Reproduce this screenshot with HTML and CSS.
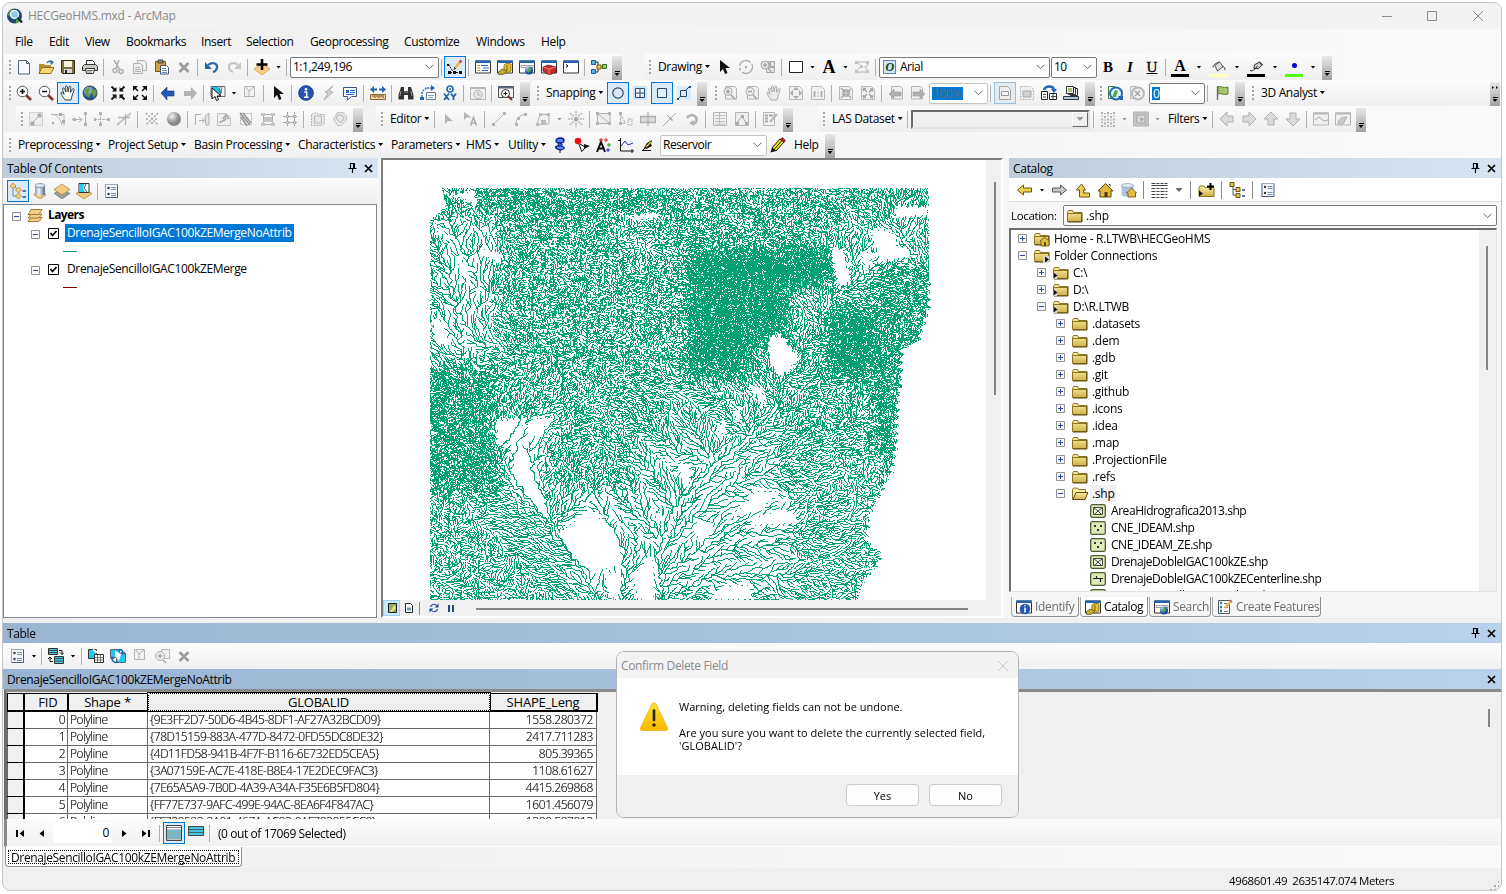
FILE: index.html
```html
<!DOCTYPE html>
<html lang="en">
<head>
<meta charset="utf-8">
<title>HECGeoHMS.mxd - ArcMap</title>
<link rel="stylesheet" href="styles.css">
</head>
<body>
<svg class="defs" aria-hidden="true">
<defs>
<linearGradient id="gold" x1="0" y1="0" x2="0" y2="1"><stop offset="0" stop-color="#fdf0a0"/><stop offset="1" stop-color="#d0b04c"/></linearGradient>
<linearGradient id="warn" x1="0" y1="0" x2="0" y2="1"><stop offset="0" stop-color="#ffe030"/><stop offset="1" stop-color="#fbb800"/></linearGradient>
<linearGradient id="cyl"><stop offset="0" stop-color="#8a9bb8"/><stop offset=".4" stop-color="#eef3fa"/><stop offset="1" stop-color="#56688c"/></linearGradient>
<radialGradient id="ball" cx=".35" cy=".3"><stop offset="0" stop-color="#f4f4f4"/><stop offset="1" stop-color="#8a8a8a"/></radialGradient>
<radialGradient id="earth" cx=".35" cy=".3"><stop offset="0" stop-color="#bfe6ff"/><stop offset="1" stop-color="#1c4f9c"/></radialGradient>
</defs>
<symbol id="app" viewBox="0 0 16 16"><circle cx="7.5" cy="8" r="7.5" fill="#1b4a70"/><path d="M2 3l3-2 2 3-3 3-3 1zM9 12l4-3-1 5-3 1z" fill="#5aa23c"/><circle cx="7.5" cy="6.5" r="4" fill="#8cc8e8" stroke="#e8f4fa" stroke-width="1.4"/><path d="M10.5 9.5l4.500 5" stroke="#14324c" stroke-width="2.600"/></symbol>
<symbol id="new" viewBox="0 0 16 16"><path d="M2.500 1.500h8l3 3v10.500h-11z" fill="#f6faff" stroke="#53657e"/><path d="M10.500 1.500v3h3" fill="none" stroke="#53657e"/></symbol>
<symbol id="open" viewBox="0 0 16 16"><path d="M1 14V5h5l1 1h6v8z" fill="#b8932c"/><path d="M1 14.500l3-6h12l-3 6z" fill="#f3da78" stroke="#8a6d20"/><path d="M9 4c1-2 3-2 5-1" stroke="#2468a8" stroke-width="1.500" fill="none"/><path d="M12 1l4 2-3 3z" fill="#2468a8"/></symbol>
<symbol id="save" viewBox="0 0 16 16"><path d="M1.500 1.500h13v13h-12l-1-1z" fill="#7d7440" stroke="#2c2810"/><path d="M4 2h8v6H4z" fill="#f5f2e0"/><path d="M4 10h8v4H4z" fill="#d8d8d8"/><path d="M5 11h2v3H5z" fill="#2c2810"/></symbol>
<symbol id="print" viewBox="0 0 16 16"><path d="M4.500 6V1.500h6l2 2V6" fill="#fff" stroke="#333"/><path d="M.5 7.500l2-2h11l2 2v4H.5z" fill="#c9c9c0" stroke="#333"/><path d="M3.500 9.500h9l-1 5h-7z" fill="#fff" stroke="#333"/><path d="M5 11.500h6M5 13h5" stroke="#777"/></symbol>
<symbol id="cut" viewBox="0 0 16 16"><g fill="none" stroke="#b0b0b0" stroke-width="1.500"><path d="M4 1l6 10M9 1L6 9"/><circle cx="5" cy="11.500" r="2"/><circle cx="11" cy="12.500" r="2"/></g></symbol>
<symbol id="copy" viewBox="0 0 16 16"><g fill="#efefef" stroke="#b0b0b0"><path d="M5.500 1.500h7l2 2v8h-9z"/><path d="M1.500 4.500h7l2 2v8h-9z"/><path d="M3 8.500h5M3 10.500h6M3 12.500h6"/></g></symbol>
<symbol id="paste" viewBox="0 0 16 16"><path d="M1.500 2.500h10v10h-10z" fill="#dba03e" stroke="#7d5414"/><path d="M4 1h5v3H4z" fill="#888" stroke="#444"/><path d="M6.500 6.500h6l2 2v6.500h-8z" fill="#fff" stroke="#445a7a"/><path d="M8 9.500h4M8 11.500h5M8 13.500h5" stroke="#6888b8"/></symbol>
<symbol id="del" viewBox="0 0 16 16"><path d="M3.500 4l9 9M12.500 4l-9 9" stroke="#9c9c9c" stroke-width="2.600"/></symbol>
<symbol id="undo" viewBox="0 0 16 16"><path d="M4 6c5-4 10-1 9 3-.5 2-2 3.500-4 4" fill="none" stroke="#2468a8" stroke-width="2.200"/><path d="M1 3v7h7z" fill="#2468a8"/></symbol>
<symbol id="redo" viewBox="0 0 16 16"><path d="M12 6C7 2 2 5 3 9c.5 2 2 3.500 4 4" fill="none" stroke="#c4c4c4" stroke-width="2"/><path d="M15 3v7H8z" fill="#c4c4c4"/></symbol>
<symbol id="add" viewBox="0 0 16 16"><path d="M8 4l8 6-8 6-8-6z" fill="#f6cf7c" stroke="#b98c3c" stroke-width=".6"/><path d="M8 0v11M2.500 5.500h11" stroke="#000" stroke-width="2.600"/></symbol>
<symbol id="edt" viewBox="0 0 16 16"><path d="M1.500 5l4 7M3 13.500h11" fill="none" stroke="#111" stroke-dasharray="2 1"/><path d="M1 12h3v3H1zM6 12h3v3H6zM12 12h3v3h-3zM0 5h2v2H0z" fill="#111"/><path d="M8 9l5-6" stroke="#f0b050" stroke-width="2.600"/><path d="M12.500 3.500l2-2" stroke="#c05858" stroke-width="2.800"/><path d="M6.500 11l.7-3 2 1.800z" fill="#333"/></symbol>
<symbol id="win" viewBox="0 0 16 16"><path d="M.5 2h15v12H.5z" fill="#fff" stroke="#333"/><path d="M0 1.500h16v2.500H0z" fill="#2463ad"/></symbol>
<symbol id="toc" viewBox="0 0 16 16"><use href="#win"/><path d="M2 6.500h3M2 9h3M2 11.500h3" stroke="#c09030"/><path d="M6 6.500h7M8 9h6M7 11.500h6" stroke="#2463ad"/></symbol>
<symbol id="cat" viewBox="0 0 16 16"><use href="#win"/><path d="M7 6l3-2 4 1v7l-4 2-3-1z" fill="#e4c02c" stroke="#776010" stroke-width=".8"/><path d="M1 13l4-3 5 2-3 3-5 1z" fill="#c8a830" stroke="#3c4c20" stroke-width=".7"/><path d="M10 6v6" stroke="#776010"/></symbol>
<symbol id="search" viewBox="0 0 16 16"><use href="#win"/><path d="M2 6.500h12v2H2z" fill="#fff" stroke="#888" stroke-width=".8"/><circle cx="10" cy="11.500" r="4" fill="url(#earth)"/><path d="M8 10l3-1 1 2-3 3z" fill="#5aa84a"/></symbol>
<symbol id="box" viewBox="0 0 16 16"><use href="#win"/><path d="M2 8l5-2 8 2v5l-7 3-6-4z" fill="#c4322a" stroke="#641410" stroke-width=".8"/><path d="M2 8l6 2 7-2M8 10v6" stroke="#ff9a8a" fill="none" stroke-width=".7"/></symbol>
<symbol id="py" viewBox="0 0 16 16"><use href="#win"/><path d="M3 5.500l2 1.500-2 1.500" stroke="#000" fill="none"/></symbol>
<symbol id="model" viewBox="0 0 16 16"><path d="M4 3h3v10H4M7 8h5" fill="none" stroke="#333"/><path d="M.5 1.500h4v4h-4zM.5 10.500h4v4h-4z" fill="#5bb5e8" stroke="#1c5c94"/><path d="M6 6h4v4H6z" fill="#f0c040" stroke="#7c6010"/><path d="M11.500 5.500h4v4h-4z" fill="#8cd070" stroke="#2c7020"/></symbol>
<symbol id="ptr" viewBox="0 0 16 16"><path d="M4 1v12l3-3 2 5 2.500-1-2-5H14z" fill="#111"/></symbol>
<symbol id="rot" viewBox="0 0 16 16"><circle cx="8" cy="8" r="6.500" fill="none" stroke="#aaa" stroke-width="1.300" stroke-dasharray="14 2 3 2"/><circle cx="8" cy="8" r="1.200" fill="#aaa"/></symbol>
<symbol id="zsel" viewBox="0 0 16 16"><g fill="#e4e4e4" stroke="#a8a8a8"><path d="M4.500 2.500h5v5h-5zM10.500 2.500h4v5h-4zM6.500 8.500h8v5h-8z"/><circle cx="5" cy="6" r="4"/><path d="M3 6h4M5 4v4M8 9l4 5" stroke-width="1.500"/></g></symbol>
<symbol id="rect" viewBox="0 0 16 16"><path d="M1.500 2.500h13v11h-13z" fill="#fff" stroke="#222" stroke-width="1"/></symbol>
<symbol id="verts" viewBox="0 0 16 16"><path d="M3 3h11v3l-3 2 4 5H2l5-6z" fill="none" stroke="#b4b4b4"/><path d="M1 2h3v3H1zM12 2h3v3h-3zM12 11h3v3h-3zM1 11h3v3H1zM6 6h3v3H6z" fill="#c4c4c4"/></symbol>
<symbol id="fill" viewBox="0 0 16 12"><path d="M4 5l5-4 4 5-6 5z" fill="#ddd" stroke="#444"/><path d="M2 7c0-3 4-5 7-6M12 6c3 0 3 2 3 4" stroke="#333" fill="none"/></symbol>
<symbol id="pen" viewBox="0 0 16 12"><path d="M5 8l1-4 5-2.500 3 3-4 4z" fill="#ccc" stroke="#222"/><path d="M1 10.500c3 1 5-1 8-5M11 .500l4 4" stroke="#111" fill="none"/></symbol>
<symbol id="zin" viewBox="0 0 16 16"><path d="M10 10l5 5" stroke="#8c3030" stroke-width="2.600"/><circle cx="6.500" cy="6.500" r="5.300" fill="#f8fbff" stroke="#555"/><path d="M4 6.500h5M6.500 4v5" stroke="#111" stroke-width="1.600"/></symbol>
<symbol id="zout" viewBox="0 0 16 16"><path d="M10 10l5 5" stroke="#8c3030" stroke-width="2.600"/><circle cx="6.500" cy="6.500" r="5.300" fill="#f8fbff" stroke="#555"/><path d="M4 6.500h5" stroke="#111" stroke-width="1.600"/></symbol>
<symbol id="hand" viewBox="0 0 16 16"><path d="M5 15C3 12 1 9 1 8s1.500-1 3 1.500L2.500 4c0-1.500 1.500-1.500 2 0L6 7 5.500 2c0-1.500 1.500-1.500 2 0L8 7l1-5c.5-1.500 2-1 1.700.500L10.500 7.500 12.500 4c1-1 2 0 1.500 1l-2 6-1 4z" fill="#fff" stroke="#333" stroke-width=".9"/></symbol>
<symbol id="ghand" viewBox="0 0 16 16"><path d="M5 15C3 12 1 9 1 8s1.500-1 3 1.500L2.500 4c0-1.500 1.500-1.500 2 0L6 7 5.500 2c0-1.500 1.500-1.500 2 0L8 7l1-5c.5-1.500 2-1 1.700.500L10.500 7.500 12.500 4c1-1 2 0 1.500 1l-2 6-1 4z" fill="#ececec" stroke="#aaa"/></symbol>
<symbol id="globe" viewBox="0 0 16 16"><circle cx="8" cy="8" r="7" fill="url(#earth)" stroke="#345"/><path d="M3 5l4-3 1 3-2 3 2 3-1 2-3-3zM10 4l4 1 .5 4-3 4-1-4z" fill="#6a9c30"/></symbol>
<symbol id="fin" viewBox="0 0 16 16"><path d="M1.500 1.500l4 4M14.500 1.500l-4 4M1.500 14.500l4-4M14.500 14.500l-4-4" stroke="#111" stroke-width="1.800"/><path d="M2 6.500h4.500V2zM14 6.500H9.500V2zM2 9.500h4.500V14zM14 9.500H9.500V14z" fill="#111"/></symbol>
<symbol id="fout" viewBox="0 0 16 16"><path d="M2 2l4 4M14 2l-4 4M2 14l4-4M14 14l-4-4" stroke="#111" stroke-width="1.500"/><path d="M1 6V1h5zM15 6V1h-5zM1 10v5h5zM15 10v5h-5z" fill="#111"/></symbol>
<symbol id="back" viewBox="0 0 16 16"><path d="M1 8l6-6v4h7v5H7v4z" fill="#2458b8" stroke="#173c80" stroke-width=".6"/></symbol>
<symbol id="fwd" viewBox="0 0 16 16"><path d="M15 8L9 2v4H2v5h7v4z" fill="#b4b4b4"/></symbol>
<symbol id="sel" viewBox="0 0 16 16"><path d="M1 1.500h14v10H1z" fill="#fff" stroke="#667"/><path d="M2 2h6l4 4-2 5-8-7z" fill="#20c0e8"/><path d="M10 2l-1 4 3 2M12 2l-2 9" stroke="#556" fill="none" stroke-width=".8"/><path d="M2 3v11l3-2.500 1.500 4 2-1-1.500-3.500h4z" fill="#fff" stroke="#111"/></symbol>
<symbol id="clr" viewBox="0 0 16 16"><path d="M2.500 1.500h10v10h-10z" fill="#f2f2f2" stroke="#b4b4b4"/><path d="M4 2l3 4v5M12 2L7 6" stroke="#b4b4b4" fill="none"/></symbol>
<symbol id="info" viewBox="0 0 16 16"><circle cx="8" cy="8" r="7.300" fill="#2456b0" stroke="#17387c"/><circle cx="8" cy="4.300" r="1.300" fill="#fff"/><path d="M6.300 7h2.400v5M6 12.300h4.500" stroke="#fff" stroke-width="1.500" fill="none"/></symbol>
<symbol id="bolt" viewBox="0 0 16 16"><path d="M13 1L5 7l3 1-4 7 9-8-4-1z" fill="#d4d4d4" stroke="#b0b0b0"/></symbol>
<symbol id="html" viewBox="0 0 16 16"><path d="M1.500 2.500h13v9h-5l-4 3.500v-3.500h-4z" fill="#fff" stroke="#3c5878"/><path d="M4 5h3v3H4z" fill="#2468c0"/><path d="M8 5.500h5M8 7.500h5M4 9.500h8" stroke="#2468c0"/></symbol>
<symbol id="meas" viewBox="0 0 16 16"><path d="M.5 9.500h15v5H.5z" fill="#f0d4a0" stroke="#8c6a34"/><path d="M3 10v2M5 10v3M7 10v2M9 10v3M11 10v2M13 10v3" stroke="#6a4a18"/><path d="M0 4.500L4 1v2.500h3v2H4V8zM16 4.500L12 1v2.500H9v2h3V8z" fill="#2463ad"/></symbol>
<symbol id="find" viewBox="0 0 16 16"><path d="M3 2h3v4h4V2h3l2.500 8v4.500H10V10H6v4.500H.500V10z" fill="#333"/><path d="M3 6l-1 5M13 6l1 5M6 7h4" stroke="#999"/></symbol>
<symbol id="route" viewBox="0 0 16 16"><path d="M2 12V7c0-2 4-2 4-4h6" fill="none" stroke="#2463ad" stroke-width="1.300" stroke-dasharray="2 1"/><path d="M11 0l4 3-4 3z" fill="#2463ad"/><path d="M6.500 7.500h9v7h-9z" fill="#fff" stroke="#667c94"/><path d="M8 10.500h6M8 12.500h5" stroke="#8aa4c0"/><path d="M0 12h4v3H0z" fill="#2463ad"/></symbol>
<symbol id="xy" viewBox="0 0 16 16"><circle cx="8" cy="4" r="3" fill="#fff" stroke="#2463ad" stroke-width="1.600"/><circle cx="8" cy="4" r="1" fill="#2463ad"/><path d="M2 8.500l5 6.500M7 8.500L2 15M9 8.500l2.500 3.500M14 8.500L11.500 12v3" stroke="#2463ad" stroke-width="1.800" fill="none"/></symbol>
<symbol id="time" viewBox="0 0 16 16"><path d="M.5 2.500h15v12H.5z" fill="#f0f0f0" stroke="#b8b8b8"/><path d="M.5 3h15" stroke="#b8b8b8" stroke-width="2"/><circle cx="8" cy="9.500" r="4.200" fill="#e8e8e8" stroke="#b0b0b0"/><path d="M8 7v3h2.500" stroke="#aaa" fill="none"/></symbol>
<symbol id="view" viewBox="0 0 16 16"><path d="M.5 1.500h15v11H.5z" fill="#f4f4f4" stroke="#555"/><path d="M.5 2.500h15" stroke="#556b84" stroke-width="2"/><path d="M10 11l4 4" stroke="#8c3030" stroke-width="2.200"/><circle cx="7.500" cy="8.500" r="4" fill="#fff" stroke="#333"/><path d="M5.500 8.500h4M7.500 6.500v4" stroke="#111"/></symbol>
<symbol id="scir" viewBox="0 0 16 16"><circle cx="8" cy="8" r="5.200" fill="none" stroke="#26466c" stroke-width="1.200"/></symbol>
<symbol id="sgrd" viewBox="0 0 16 16"><path d="M1 1h14v14H1z" fill="#cfe6f8"/><path d="M3.500 3.500h9v9h-9zM8 3.500v9M3.500 8h9" fill="#eef7ff" stroke="#26466c"/></symbol>
<symbol id="ssq" viewBox="0 0 16 16"><path d="M3.500 3.500h9v9h-9z" fill="#e0f0fc" stroke="#26466c" stroke-width="1"/></symbol>
<symbol id="sedg" viewBox="0 0 16 16"><path d="M1 1h14v14H1z" fill="#d8ebf8"/><path d="M4.500 5.500h6v6h-6zM1 15l4-4M10 5l4-4" fill="none" stroke="#26466c"/><path d="M1 14h2M13 2h2" stroke="#26466c" stroke-width="2"/></symbol>
<symbol id="pg" viewBox="0 0 16 16"><path d="M3.500 1.500h9l2 2v10.500h-11z" fill="#f0f0f0" stroke="#b4b4b4"/></symbol>
<symbol id="lzin" viewBox="0 0 16 16"><use href="#pg"/><circle cx="6" cy="6.500" r="4" fill="#eee" stroke="#a8a8a8"/><path d="M4 6.500h4M6 4.500v4M9 10l4 4" stroke="#a0a0a0" stroke-width="1.500"/></symbol>
<symbol id="lzout" viewBox="0 0 16 16"><use href="#pg"/><circle cx="6" cy="6.500" r="4" fill="#eee" stroke="#a8a8a8"/><path d="M4 6.500h4M9 10l4 4" stroke="#a0a0a0" stroke-width="1.500"/></symbol>
<symbol id="lfull" viewBox="0 0 16 16"><path d="M1.500 1.500h10l3 3v10h-13z" fill="#f0f0f0" stroke="#b8b8b8"/><path d="M8 2l3 3H5zM8 14l3-3H5zM2 8l3-3v6zM14 8l-3-3v6z" fill="#a8a8a8"/></symbol>
<symbol id="l11" viewBox="0 0 16 16"><path d="M1.500 1.500h10l3 3v10h-13z" fill="#f0f0f0" stroke="#b8b8b8"/><path d="M4.500 6v6M8 7.500v1M8 10.500v1M11.500 6v6" stroke="#a8a8a8" stroke-width="1.600"/></symbol>
<symbol id="lfin" viewBox="0 0 16 16"><path d="M1.500 1.500h10l3 3v10h-13z" fill="#f0f0f0" stroke="#b8b8b8"/><path d="M3 3l4 4M13 4L9 7.500M3 13l4-4M13 13L9 9M4 7h3V4M12 7H9V4M4 9h3v3M12 9H9v3" stroke="#a4a4a4" stroke-width="1.400" fill="none"/></symbol>
<symbol id="lfout" viewBox="0 0 16 16"><path d="M1.500 1.500h10l3 3v10h-13z" fill="#f0f0f0" stroke="#b8b8b8"/><path d="M4 4l3 3M12 4.500L9 7.500M4 12l3-3M12 12L9 9M3.500 6V3.500H6M12.500 6.500V4H10M3.500 10v2.500H6M12.500 10v2.500H10" stroke="#a4a4a4" stroke-width="1.400" fill="none"/></symbol>
<symbol id="lback" viewBox="0 0 16 16"><use href="#pg"/><path d="M1 9l5-5v3h7v4H6v3z" fill="#b0b0b0" stroke="#9c9c9c" stroke-width=".6"/></symbol>
<symbol id="lfwd" viewBox="0 0 16 16"><path d="M1.500 1.500h9l2 2v10.500h-11z" fill="#f0f0f0" stroke="#b4b4b4"/><path d="M15 9l-5-5v3H3v4h7v3z" fill="#b0b0b0" stroke="#9c9c9c" stroke-width=".6"/></symbol>
<symbol id="ldraft" viewBox="0 0 16 16"><path d="M2.500 1.500h8l3 3v10h-11z" fill="#eee" stroke="#a4a4a4"/><path d="M4.500 6.500h7v4h-7z" fill="#f8f8f8" stroke="#999"/></symbol>
<symbol id="lfoc" viewBox="0 0 16 16"><path d="M1.500 1.500h10l3 3v10h-13z" fill="#f0f0f0" stroke="#b8b8b8" stroke-dasharray="2 1"/><path d="M4 6h8v6H4z" fill="#d0d0d0" stroke="#aaa"/></symbol>
<symbol id="lchg" viewBox="0 0 16 16"><path d="M3 5c1-4 8-5 10-1" stroke="#2463ad" stroke-width="2.400" fill="none"/><path d="M10 4h6l-3 4z" fill="#2463ad"/><path d="M.5 6.500h6v8h-6zM8.500 8.500h7v6h-7z" fill="#fff" stroke="#222"/><path d="M2 9.500h3M2 12h3M12 9v5M10 11.500h5" stroke="#444"/></symbol>
<symbol id="ddp" viewBox="0 0 16 16"><path d="M7.500 3.500h7v7h-7z" fill="#fff" stroke="#333"/><path d="M5.500 2.500h7v7h-7z" fill="#fff" stroke="#333"/><path d="M3.500 1.500h7v7h-7z" fill="#f4f4f4" stroke="#333"/><path d="M5 3h4v4H5z" fill="#a8c46c"/><path d="M.5 11.500h15v3H.5z" fill="#a8c8e8" stroke="#333"/></symbol>
<symbol id="gref" viewBox="0 0 16 16"><path d="M1.500 1.500h6v12h-6z" fill="#fff" stroke="#3c7848"/><circle cx="9" cy="8.500" r="6" fill="#e0f4ff" stroke="#2468a8" stroke-width="2"/><path d="M5 12l3-7 3 1-2 6z" fill="#58a848"/><path d="M11 11h5v4h-3z" fill="#2468a8"/></symbol>
<symbol id="grefx" viewBox="0 0 16 16"><path d="M1.500 1.500h6v12h-6z" fill="#eee" stroke="#bbb"/><circle cx="9" cy="8.500" r="6" fill="#eee" stroke="#b8b8b8" stroke-width="1.800"/><path d="M6 6l5 5M11 6l-5 5" stroke="#aaa" stroke-width="1.600"/></symbol>
<symbol id="flag" viewBox="0 0 16 16"><path d="M3.500 1v14" stroke="#667" stroke-width="1.400"/><path d="M4 2c3-1.500 4 1.500 10 0v7c-5 1.500-7-1.500-10 0z" fill="#a8c46c" stroke="#5c7c34"/></symbol>
<!-- Greyed-out advanced editing, topology and editor tools -->
<symbol id="a1" viewBox="0 0 16 16"><path d="M1.500 1.500h13v13h-13z" fill="#eee" stroke="#b0b0b0" stroke-dasharray="1 1"/><path d="M4 12l8-8M3 11h3v3H3zM10 3h3v3h-3z" fill="#aaa" stroke="#aaa"/></symbol>
<symbol id="a2" viewBox="0 0 16 16"><path d="M1 3.500h13v11M2 3c5 1 9 5 10 11" fill="none" stroke="#bbb"/><path d="M2 11h2v2H2zM9 2h3v3H9zM12 9h3v3h-3z" fill="#aaa"/></symbol>
<symbol id="a3" viewBox="0 0 16 16"><path d="M0 8.500h10M7 6l3 2.500L7 11M13.500 2v12" fill="none" stroke="#b0b0b0"/><path d="M12 1h3v3h-3zM12 12h3v3h-3zM1 7h3v3H1z" fill="#b4b4b4"/></symbol>
<symbol id="a4" viewBox="0 0 16 16"><path d="M0 8.500h15M6.500 2v12" fill="none" stroke="#b0b0b0" stroke-dasharray="3 1"/><path d="M5 1h3v3H5zM5 12h3v3H5zM13 7h3v3h-3zM0 7h2v3H0z" fill="#b4b4b4"/></symbol>
<symbol id="a5" viewBox="0 0 16 16"><path d="M1 14l9-8 5-4M2 6.500h12M9.500 3v11" fill="none" stroke="#b0b0b0" stroke-width="1.300"/></symbol>
<symbol id="a6" viewBox="0 0 16 16"><path d="M2 2l12 12M14 2L2 14M8 2v3M8 11v3M2 8h3M11 8h3" fill="none" stroke="#a8a8a8" stroke-width="1.500" stroke-dasharray="2 1.500"/></symbol>
<symbol id="a7" viewBox="0 0 16 16"><circle cx="8" cy="8" r="7" fill="url(#ball)"/></symbol>
<symbol id="a8" viewBox="0 0 16 16"><path d="M1.500 3v11M2 3.500h5M5 9.500h5M8 7l2.500 2.500L8 12" fill="none" stroke="#b0b0b0"/><path d="M11 5l4-3v12h-3z" fill="#e4e4e4" stroke="#b0b0b0"/></symbol>
<symbol id="a9" viewBox="0 0 16 16"><path d="M1.500 2.500h9l4 4v8h-13z" fill="#eee" stroke="#c0c0c0"/><path d="M4 12c0-3 6-1 6-5M7 8l3-4 3 4" fill="none" stroke="#a4a4a4" stroke-width="1.500"/></symbol>
<symbol id="a10" viewBox="0 0 16 16"><path d="M2.500 2.500h11v11h-11z" fill="none" stroke="#b0b0b0" stroke-dasharray="2 1"/><path d="M2 2l10 12M5 2l8 10M3 6l6 9" stroke="#9c9c9c" stroke-width="1.800"/></symbol>
<symbol id="a11" viewBox="0 0 16 16"><path d="M3 3.500h10M3 8.500h10M3 13.500h10M3.500 3v11M12.500 3v11" fill="none" stroke="#b0b0b0"/><path d="M1 2h4v3H1zM11 2h4v3h-4zM1 12h4v3H1zM11 12h4v3h-4zM4 6h8v5H4z" fill="#c4c4c4"/></symbol>
<symbol id="a12" viewBox="0 0 16 16"><path d="M5.500 1v14M12.500 1v14M1 5.500h14M1 11.500h14" fill="none" stroke="#a8a8a8"/><path d="M4.500 4.500h2v2h-2zM11.500 4.500h2v2h-2zM4.500 10.500h2v2h-2zM11.500 10.500h2v2h-2z" fill="#e8e8e8" stroke="#aaa"/></symbol>
<symbol id="a13" viewBox="0 0 16 16"><path d="M1.500 3.500l4-2 4 2h5v9l-3 2h-10z" fill="#e8e8e8" stroke="#b0b0b0" stroke-dasharray="2 1"/><path d="M4.500 5h7v7h-7z" fill="none" stroke="#b8b8b8"/></symbol>
<symbol id="a14" viewBox="0 0 16 16"><path d="M5.500 1.500h6l3 4v4l-5 5h-4l-4-6z" fill="#e8e8e8" stroke="#b0b0b0" stroke-dasharray="2 1"/><path d="M6 4h4l2 3-3 5-5-5z" fill="none" stroke="#b8b8b8"/></symbol>
<symbol id="e1" viewBox="0 0 16 16"><path d="M4 3v10l3-3h5z" fill="#b4b4b4"/></symbol>
<symbol id="e2" viewBox="0 0 16 16"><path d="M1 1v8l2.500-2.500h5z" fill="#b4b4b4"/><path d="M7.500 14.500l3-8 3 8M8.500 12h4" fill="none" stroke="#acacac" stroke-width="1.600"/></symbol>
<symbol id="e3" viewBox="0 0 16 16"><path d="M3 13L13 3" stroke="#b4b4b4"/><path d="M1 12h3v3H1zM12 1h3v3h-3z" fill="#b4b4b4"/></symbol>
<symbol id="e4" viewBox="0 0 16 16"><path d="M3 13c0-6 4-9 10-10" stroke="#b4b4b4" fill="none"/><path d="M2 12h3v3H2zM4 6h3v3H4zM11 2h3v3h-3z" fill="#b4b4b4"/></symbol>
<symbol id="e5" viewBox="0 0 16 16"><path d="M5 3.500h9v9l-4 1H2z" stroke="#b4b4b4" fill="#f0f0f0"/><path d="M4 2h3v3H4zM12 2h3v3h-3zM1 12h3v3H1zM6 9h5v5H6z" fill="#bcbcbc"/></symbol>
<symbol id="e6" viewBox="0 0 16 16"><path d="M8 0v16M0 8h16M2 2l4 4M14 2l-4 4M2 14l4-4M14 14l-4-4" stroke="#b4b4b4" stroke-dasharray="2 1" stroke-width="1.500"/><path d="M6 6h4v4H6z" fill="#b0b0b0"/></symbol>
<symbol id="e7" viewBox="0 0 16 16"><path d="M1.500 2.500l12 10h-12zM2 2.500h12v10" stroke="#b0b0b0" fill="#eee"/><path d="M0 1h3v3H0zM12 1h3v3h-3zM0 11h3v3H0zM12 11h3v3h-3z" fill="#b4b4b4"/></symbol>
<symbol id="e8" viewBox="0 0 16 16"><path d="M2.500 2.500v10h5zM10 8h4v6h-4z" stroke="#b0b0b0" fill="#eee" stroke-dasharray="3 1"/><path d="M1 1h3v3H1zM1 11h3v3H1z" fill="#b4b4b4"/></symbol>
<symbol id="e9" viewBox="0 0 16 16"><path d="M.5 5.500h15v6H.5zM8 1v14" stroke="#b0b0b0" fill="#dcdcdc" stroke-width="1.300"/></symbol>
<symbol id="e10" viewBox="0 0 16 16"><path d="M1 15L14 2M5 4l5 5" stroke="#acacac"/><path d="M8 6l3 3-1 1-3-3z" fill="#999"/></symbol>
<symbol id="e11" viewBox="0 0 16 16"><path d="M3 7a5 4.500 0 1 1 6 6" stroke="#b4b4b4" fill="none" stroke-width="2.600"/><path d="M10 9v6l-5-3z" fill="#b4b4b4"/></symbol>
<symbol id="e12" viewBox="0 0 16 16"><path d="M1.500 1.500h13v13h-13z" fill="#f2f2f2" stroke="#b4b4b4"/><path d="M3 4.500h10M3 7.500h10M3 10.500h10M3 13h10M7.500 2v12" stroke="#bcbcbc"/></symbol>
<symbol id="e13" viewBox="0 0 16 16"><path d="M1.500 1.500h13v13h-13z" fill="#eee" stroke="#b4b4b4"/><path d="M3 12l5-7 4 7" stroke="#aaa" fill="none"/><path d="M2 11h3v3H2zM7 4h3v3H7zM11 11h3v3h-3z" fill="#aaa"/></symbol>
<symbol id="e14" viewBox="0 0 16 16"><path d="M1.500 1.500h11v13h-11z" fill="#f2f2f2" stroke="#b4b4b4"/><path d="M3 4.500h3M3 7.500h3M3 10.500h3M7 4.500h4" stroke="#aaa" stroke-width="2"/><path d="M8 11l7-8" stroke="#bbb" stroke-width="2.400"/></symbol>
<symbol id="las" viewBox="0 0 16 16"><path d="M2 1v15M8 1v15M14 1v15" stroke="#b0b0b0" stroke-width="2" stroke-dasharray="2 1.500 1 2"/><path d="M5 2v14M11 2v14" stroke="#b0b0b0" stroke-width="2" stroke-dasharray="1 2 2 1.500"/></symbol>
<symbol id="sq" viewBox="0 0 16 16"><path d="M.5 1h15v14H.5z" fill="#c4c4c4" stroke="#b4b4b4"/><path d="M4 4h8v8H4z" fill="#d8d8d8" stroke="#a8a8a8"/><path d="M7 6l4 2-3 3z" fill="#a8a8a8"/></symbol>
<symbol id="ar" viewBox="0 0 16 16"><path d="M1 8l7-7v4h6v6H8v4z" fill="#dadada" stroke="#b0b0b0"/></symbol>
<symbol id="prof" viewBox="0 0 16 16"><path d="M.5 2h15v12H.5z" fill="#f0f0f0" stroke="#b4b4b4"/><path d="M0 1.500h16v2H0z" fill="#b8b8b8"/><path d="M2 9l4-3 5 4 4-1" fill="none" stroke="#a8a8a8"/></symbol>
<symbol id="prof2" viewBox="0 0 16 16"><path d="M.5 2h15v12H.5z" fill="#f0f0f0" stroke="#b4b4b4"/><path d="M0 1.500h16v2H0z" fill="#b8b8b8"/><path d="M3 13c0-5 4-7 9-7l-4 7z" fill="#ccc" stroke="#b0b0b0"/></symbol>
<!-- HEC-GeoHMS tools -->
<symbol id="h1" viewBox="0 0 16 16"><ellipse cx="8" cy="3.500" rx="4" ry="2.500" fill="#5c88ff" stroke="#101880" stroke-width="1.300"/><path d="M6 5.500l4 1.500v3H6.500z" fill="#3c6cf0" stroke="#101880"/><path d="M3.500 10c2-2 8-1 9 1-2 3-8 2-9-1z" fill="#5c88ff" stroke="#101880" stroke-width="1.200"/><path d="M8 12v4" stroke="#111"/></symbol>
<symbol id="h2" viewBox="0 0 16 16"><path d="M4 5l4 10" stroke="#111"/><circle cx="4" cy="4" r="3.300" fill="#f01010"/><path d="M8.500 14l3-4M6 7l5 3" stroke="#111" fill="none"/><path d="M10 7l6 2-6 3z" fill="#111"/></symbol>
<symbol id="h3" viewBox="0 0 16 16"><path d="M1 15L5 5l4 10M2.500 11.500h5" stroke="#111" stroke-width="2" fill="none"/><path d="M5 1v4M3 3h4M10 1v4M8 3h4" stroke="#e02020"/><path d="M13 6v4M11 8h4" stroke="#20a020"/><path d="M12 11v4M10 13h4" stroke="#2020e0"/></symbol>
<symbol id="h4" viewBox="0 0 16 16"><path d="M2.500 1v13H16M0 3.500h2M14 12v4" stroke="#111" fill="none"/><path d="M3 9l4-5 3 4 5-2" stroke="#2030d0" fill="none"/></symbol>
<symbol id="h5" viewBox="0 0 16 16"><path d="M4 11l3-5 5-3-1 4 1 2-6 3z" fill="#111"/><path d="M6 10l5-5" stroke="#f0e040" stroke-width="1.500"/><path d="M2 13.500h9M2 14l3-3" stroke="#111"/></symbol>
<symbol id="pencil" viewBox="0 0 16 16"><path d="M2 11l8-9 4 3-8 9z" fill="#f8e818" stroke="#111"/><path d="M10.500 2l2-1.500 3 3L14 5.500z" fill="#e01818" stroke="#111" stroke-width=".5"/><path d="M.5 15.500l1.500-5 4 3.500z" fill="#111"/><path d="M4 12.500l8-9" stroke="#111"/></symbol>
<!-- Panels -->
<symbol id="t1" viewBox="0 0 16 16"><path d="M3 4v9h4M5 4l3 3" fill="none" stroke="#888"/><path d="M3 0l3 3-3 3-3-3zM8.500 4l3 3-3 3-3-3zM8.500 10l3 3-3 3-3-3z" fill="#f3cc7e" stroke="#a87c34" stroke-width=".7"/><path d="M12.500 8h3.500M12.500 14h3.500" stroke="#26569a" stroke-width="1.600"/></symbol>
<symbol id="t2" viewBox="0 0 16 16"><path d="M8 16l-6-4 2-3h8l2 3z" fill="#f0c878" stroke="#a07838" stroke-width=".6"/><path d="M3 2h10v9c0 2-10 2-10 0z" fill="url(#cyl)"/><ellipse cx="8" cy="2.500" rx="5" ry="2" fill="#dfe8f4" stroke="#5c6c84" stroke-width=".6"/></symbol>
<symbol id="t3" viewBox="0 0 16 16"><path d="M8 5l8 5.500L8 16l-8-5.500z" fill="#9c9c9c" stroke="#666" stroke-width=".5"/><path d="M8 1l8 5.500L8 12 0 6.500z" fill="#f4cd80" stroke="#a87c34" stroke-width=".7"/></symbol>
<symbol id="t4" viewBox="0 0 16 16"><path d="M8 5l8 5.500L8 16l-8-5.500z" fill="#f0c878" stroke="#a87c34" stroke-width=".7"/><path d="M3 .500h10v9H3z" fill="#fff" stroke="#333"/><path d="M3.500 1h5L7 5l2 4H3.500z" fill="#20d0f0"/><path d="M10 1l-2 4 3 4" stroke="#555" fill="none"/></symbol>
<symbol id="opt" viewBox="0 0 16 16"><path d="M1.500 1.500h12v13h-12z" fill="#f6f9fd" stroke="#455a78"/><path d="M1.500 14.500V1.500h12" stroke="#9caabc" fill="none"/><circle cx="4.500" cy="5" r="1.200" fill="#333"/><circle cx="4.500" cy="11" r="1.200" fill="#333"/><path d="M7 4.500h5M7 6.500h5M7 10.500h5M7 12.500h5" stroke="#6880a8" stroke-width=".9"/></symbol>
<symbol id="layers" viewBox="0 0 16 16"><g fill="#f0d08c" stroke="#a06c20" stroke-width=".9"><path d="M1 14.500l3-4h11l-3 4z"/><path d="M1 11l3-4h11l-3 4z"/><path d="M1 7.500l3-5h11l-3 5z"/></g></symbol>
<symbol id="plus" viewBox="0 0 9 9"><path d="M.5.500h8v8h-8z" fill="#f8f8f8" stroke="#919191"/><path d="M2 4.500h5M4.500 2v5" stroke="#2b4a9c"/></symbol>
<symbol id="minus" viewBox="0 0 9 9"><path d="M.5.500h8v8h-8z" fill="#f8f8f8" stroke="#919191"/><path d="M2 4.500h5" stroke="#2b4a9c"/></symbol>
<symbol id="chk" viewBox="0 0 11 11"><path d="M.5.500h10v10H.500z" fill="#fff" stroke="#000"/><path d="M2.500 5l2 2.500L8.500 3" stroke="#000" stroke-width="1.700" fill="none"/></symbol>
<symbol id="fold" viewBox="0 0 16 16"><path d="M.5 13.500v-9l1-2h4l1 2h8v9z" fill="url(#gold)" stroke="#8a7420"/><path d="M1 5.500h13" stroke="#8a7420"/><path d="M15 4.500v9.500H1" stroke="#5c4a10" fill="none"/></symbol>
<symbol id="foldh" viewBox="0 0 16 16"><use href="#fold"/><path d="M6 10l4.500-4 4.500 4v5H7v-5z" fill="#e4c040" stroke="#5c4810" stroke-width=".8"/><path d="M10 11h2v4h-2z" fill="#5c4810"/></symbol>
<symbol id="foldp" viewBox="0 0 16 16"><use href="#fold"/><path d="M9 8h6v7H9z" fill="#d8dccc"/><path d="M11 8.500l4 3-4 3z" fill="#111"/></symbol>
<symbol id="foldc" viewBox="0 0 16 16"><use href="#fold"/><path d="M0 8h4v6H0z" fill="#d8dccc"/><path d="M.5 7.500l4 3-4 3z" fill="#111"/></symbol>
<symbol id="foldo" viewBox="0 0 16 16"><path d="M.5 13.500v-10l1-1.500h4l1 1.500h7v4" fill="#fdf0a0" stroke="#8a7420"/><path d="M1 13.500l3-7h12l-3 7z" fill="url(#gold)" stroke="#5c4a10"/></symbol>
<symbol id="shp" viewBox="0 0 16 14"><rect x=".7" y=".7" width="14.600" height="12.600" rx="1.500" fill="#dcecb4" stroke="#4c5c38" stroke-width="1.300"/></symbol>
<symbol id="poly" viewBox="0 0 16 14"><use href="#shp"/><path d="M3.500 3.500h9v7h-9zM4 4l4 3-3 3M12 4L8 7l3 3" fill="#eef6d8" stroke="#333" stroke-width=".9"/></symbol>
<symbol id="pts" viewBox="0 0 16 14"><use href="#shp"/><path d="M4 4h2v2H4zM10 4h2v2h-2zM7 8h2v2H7z" fill="#333"/></symbol>
<symbol id="lin" viewBox="0 0 16 14"><use href="#shp"/><path d="M3 6.500h10M6.500 4v3M10.500 6v4" stroke="#222" stroke-width="1.200"/></symbol>
<symbol id="cbk" viewBox="0 0 16 16"><path d="M1 8l6-5v3h8v4H7v3z" fill="#f0d050" stroke="#6a5410"/></symbol>
<symbol id="cfw" viewBox="0 0 16 16"><path d="M15 8L9 3v3H1v4h8v3z" fill="#c8c8c8" stroke="#555"/></symbol>
<symbol id="cup" viewBox="0 0 16 16"><path d="M2 8l5-6 4 6H9v3h6v4H5V8z" fill="#f0d050" stroke="#6a5410"/></symbol>
<symbol id="home" viewBox="0 0 16 16"><path d="M.5 9L8 1.500 15.500 9h-2v6h-11V9z" fill="#dcb83c" stroke="#5c4810"/><path d="M7 10h3v5H7z" fill="#4c3808"/><path d="M11 2h2v3z" fill="#5c4810"/></symbol>
<symbol id="dbh" viewBox="0 0 16 16"><path d="M1 3h12v10c0 2-12 2-12 0z" fill="#b0c4e0"/><ellipse cx="7" cy="3.500" rx="6" ry="2" fill="#dfe8f4" stroke="#7c8ca8" stroke-width=".6"/><path d="M6 11l5-5 5 5h-1v4H7.500v-4z" fill="#e4c040" stroke="#5c4810" stroke-width=".8"/></symbol>
<symbol id="list" viewBox="0 0 16 16"><path d="M0 1.500h4M5 1.500h3M9 1.500h3M13 1.500h3M0 3.500h16" stroke="#444"/><path d="M0 6.500h16M0 9.500h16M0 12.500h16M0 15.500h16" stroke="#444" stroke-dasharray="4 1 3 1"/></symbol>
<symbol id="fadd" viewBox="0 0 16 16"><path d="M.5 14.500v-9l1-1.500h4l1 1.500h9v9z" fill="url(#gold)" stroke="#8a7420"/><path d="M.5 8.500l4 3-4 3z" fill="#111"/><path d="M12 1v7M8.500 4.500h7" stroke="#000" stroke-width="2"/></symbol>
<symbol id="tree" viewBox="0 0 16 16"><path d="M3.500 4v9h4M3.500 7.500h4" fill="none" stroke="#555"/><path d="M.5.500h4v4h-4zM6.500 5.500h4v4h-4zM6.500 11.500h4v4h-4z" fill="#e4c850" stroke="#6a5410"/><path d="M12.500 8h3M12.500 14h3" stroke="#26569a" stroke-width="1.600"/></symbol>
<symbol id="idw" viewBox="0 0 16 16"><use href="#win"/><circle cx="9" cy="10" r="5.300" fill="#2456b0"/><path d="M9 8.500v5M9 6v1.300" stroke="#fff" stroke-width="1.500"/></symbol>
<symbol id="cf" viewBox="0 0 16 16"><path d="M1.500 1.500h11v13h-11z" fill="#fff" stroke="#555"/><path d="M3 4h2M3 8h2M3 12h2" stroke="#2880a0" stroke-width="2.500"/><path d="M7 4.500h4M7 8.500h4M7 12.500h4" stroke="#777"/><path d="M8 9l6-7" stroke="#f0b050" stroke-width="2.600"/><path d="M13.500 2.500l1-1" stroke="#c05050" stroke-width="2.800"/></symbol>
<symbol id="rel" viewBox="0 0 16 16"><path d="M.5.500h9v6h-9zM6.500 8.500h9v7h-9z" fill="#48c0d8" stroke="#333"/><path d="M1 2.500h8M1 4.500h8M7 10.500h8M7 13h8" stroke="#333" stroke-width=".8"/><path d="M11 2.500h3v4M12 4.500l2 2 2-2M5 13.500H2V9M0 11l2-2 2 2" fill="none" stroke="#111"/></symbol>
<symbol id="sat" viewBox="0 0 16 16"><path d="M.5 1.500h8v9h-8z" fill="#20c8f0" stroke="#333"/><path d="M5 1.500l4 3" stroke="#fff" stroke-width="2"/><path d="M6.500 6.500h9v8h-9z" fill="#fff" stroke="#333"/><path d="M7 9.500h8M7 12h8M9.500 7v7M12.500 7v7" stroke="#555" stroke-width=".8"/></symbol>
<symbol id="sw" viewBox="0 0 16 16"><path d="M.5 1.500h9v8h-9zM6.500 5.500h9v9h-9z" fill="#20c8f0" stroke="#667"/><path d="M5 3l6 3-2 7-4-5z" fill="#fff"/><path d="M8 2c3-1 5 0 5 3M8 14c-3 1-6 0-6-4" stroke="#2463ad" stroke-width="1.600" fill="none"/><path d="M10.500 4h5L13 7zM0 11h4.500L2 8z" fill="#2463ad"/></symbol>
<symbol id="gz" viewBox="0 0 16 16"><path d="M7.500 1.500h8v9h-8z" fill="#f0f0f0" stroke="#b8b8b8"/><circle cx="6" cy="8" r="4.500" fill="#f0f0f0" stroke="#b0b0b0"/><path d="M3.500 8h5M6 5.500v5M9 12l3 3" stroke="#a8a8a8" stroke-width="1.500"/></symbol>
<symbol id="all" viewBox="0 0 16 16"><path d="M.5.500h15v15H.500z" fill="#fff" stroke="#444"/><path d="M1 6.500h14M1 9.500h14M1 12.500h14" stroke="#5cc4d8" stroke-width="1.800"/><path d="M1 5h14M1 8h14M1 11h14M1 14h14M1 2.500h14" stroke="#555" stroke-width=".7"/></symbol>
<symbol id="selr" viewBox="0 0 16 10"><path d="M.5.500h15v9H.500z" fill="#48c8e0" stroke="#444"/><path d="M1 3.500h14M1 6.500h14" stroke="#444" stroke-width=".8"/></symbol>
<symbol id="pin" viewBox="0 0 9 10"><path d="M2.500 5.500v-5h4v5M5.500 1v5M.500 5.500h8M4.500 6v4" fill="none" stroke="#000" stroke-width="1.100"/></symbol>
<symbol id="x" viewBox="0 0 9 9"><path d="M1 1l7 7M8 1L1 8" stroke="#000" stroke-width="1.700"/></symbol>
<symbol id="chev" viewBox="0 0 9 6"><path d="M.5.700l4 4 4-4" fill="none" stroke="#666" stroke-width="1"/></symbol>
<symbol id="dv" viewBox="0 0 10 10"><path d="M1.500.500h8v9h-8z" fill="#8cb060" stroke="#222"/><path d="M3 9l4-7 2 3-4 4z" fill="#e8e080"/></symbol>
<symbol id="lv" viewBox="0 0 10 10"><path d="M1.500.500h5l2 2v7h-7z" fill="#fff" stroke="#222"/><path d="M3 4.500h4v3H3z" fill="#6898b0"/></symbol>
<symbol id="rf" viewBox="0 0 10 10"><path d="M1.500 4a3.500 3.500 0 0 1 6-1.500M8.500 6a3.500 3.500 0 0 1-6 1.500" stroke="#1c4890" stroke-width="1.100" fill="none"/><path d="M9.500.500v4h-4zM.500 9.500v-4h4z" fill="#1c4890"/></symbol>
</svg>

<div class="window">
  <header class="titlebar"><svg class="ic"><use href="#app"/></svg><span class="title">HECGeoHMS.mxd - ArcMap</span>
    <svg class="winbtns" viewBox="0 0 110 12"><path d="M5 6.500h10M50.500 1.500h9v9h-9zM96 1l10 10M106 1L96 11" fill="none" stroke="#8c8c8c"/></svg></header>
  <nav class="menu"><span>File</span><span>Edit</span><span>View</span><span>Bookmarks</span><span>Insert</span><span>Selection</span><span>Geoprocessing</span><span>Customize</span><span>Windows</span><span>Help</span></nav>

  <div class="row row1">
    <div class="bar"><i class="grip"></i><svg class="ic"><use href="#new"/></svg><svg class="ic"><use href="#open"/></svg><svg class="ic"><use href="#save"/></svg><svg class="ic"><use href="#print"/></svg><i class="sep"></i><svg class="ic"><use href="#cut"/></svg><svg class="ic"><use href="#copy"/></svg><svg class="ic"><use href="#paste"/></svg><svg class="ic"><use href="#del"/></svg><i class="sep"></i><svg class="ic"><use href="#undo"/></svg><svg class="ic"><use href="#redo"/></svg><i class="sep"></i><svg class="ic"><use href="#add"/></svg><i class="arr"></i><i class="sep"></i><span class="combo scale">1:1,249,196<svg class="chev"><use href="#chev"/></svg></span><i class="sep thin"></i><svg class="ic on"><use href="#edt"/></svg><i class="sep"></i><svg class="ic"><use href="#toc"/></svg><svg class="ic"><use href="#cat"/></svg><svg class="ic"><use href="#search"/></svg><svg class="ic"><use href="#box"/></svg><svg class="ic"><use href="#py"/></svg><i class="sep"></i><svg class="ic"><use href="#model"/></svg><i class="ovf"></i></div>
    <div class="bar"><i class="grip"></i><span class="lbl w-drawing">Drawing<i class="tri"></i></span><svg class="ic"><use href="#ptr"/></svg><svg class="ic"><use href="#rot"/></svg><svg class="ic"><use href="#zsel"/></svg><i class="sep"></i><svg class="ic"><use href="#rect"/></svg><i class="arr"></i><span class="glyph big">A</span><i class="arr"></i><svg class="ic"><use href="#verts"/></svg><i class="sep"></i><span class="combo font"><b class="otf">O</b>Arial<svg class="chev"><use href="#chev"/></svg></span><span class="combo size">10<svg class="chev"><use href="#chev"/></svg></span><span class="glyph">B</span><span class="glyph it">I</span><span class="glyph un">U</span><i class="sep"></i><span class="swatch black"><b>A</b></span><i class="arr wide"></i><span class="swatch cream"><svg><use href="#fill"/></svg></span><i class="arr wide"></i><span class="swatch black"><svg><use href="#pen"/></svg></span><i class="arr wide"></i><span class="swatch lime"><i class="dot"></i></span><i class="arr wide"></i><i class="ovf"></i></div>
  </div>

  <div class="row row2">
    <div class="bar"><i class="grip"></i><svg class="ic"><use href="#zin"/></svg><svg class="ic"><use href="#zout"/></svg><svg class="ic on"><use href="#hand"/></svg><svg class="ic"><use href="#globe"/></svg><i class="sep"></i><svg class="ic"><use href="#fin"/></svg><svg class="ic"><use href="#fout"/></svg><i class="sep"></i><svg class="ic"><use href="#back"/></svg><svg class="ic"><use href="#fwd"/></svg><i class="sep"></i><svg class="ic"><use href="#sel"/></svg><i class="arr"></i><svg class="ic"><use href="#clr"/></svg><i class="sep"></i><svg class="ic"><use href="#ptr"/></svg><i class="sep"></i><svg class="ic"><use href="#info"/></svg><svg class="ic"><use href="#bolt"/></svg><svg class="ic"><use href="#html"/></svg><i class="sep"></i><svg class="ic"><use href="#meas"/></svg><i class="sep"></i><svg class="ic"><use href="#find"/></svg><svg class="ic"><use href="#route"/></svg><svg class="ic"><use href="#xy"/></svg><i class="sep"></i><svg class="ic"><use href="#time"/></svg><i class="sep"></i><svg class="ic"><use href="#view"/></svg><i class="ovf"></i></div>
    <div class="bar"><i class="grip"></i><span class="lbl w-snapping">Snapping<i class="tri"></i></span><svg class="ic on"><use href="#scir"/></svg><svg class="ic"><use href="#sgrd"/></svg><svg class="ic on"><use href="#ssq"/></svg><svg class="ic"><use href="#sedg"/></svg><i class="ovf"></i></div>
    <div class="bar"><i class="grip"></i><svg class="ic"><use href="#lzin"/></svg><svg class="ic"><use href="#lzout"/></svg><svg class="ic"><use href="#ghand"/></svg><svg class="ic"><use href="#lfull"/></svg><svg class="ic"><use href="#l11"/></svg><i class="sep"></i><svg class="ic"><use href="#lfin"/></svg><svg class="ic"><use href="#lfout"/></svg><i class="sep"></i><svg class="ic"><use href="#lback"/></svg><svg class="ic"><use href="#lfwd"/></svg><span class="combo pct"><span class="hl dim">100%</span><svg class="chev"><use href="#chev"/></svg></span><i class="sep"></i><svg class="ic on off"><use href="#ldraft"/></svg><svg class="ic"><use href="#lfoc"/></svg><svg class="ic"><use href="#lchg"/></svg><svg class="ic"><use href="#ddp"/></svg><i class="ovf"></i></div>
    <div class="bar"><i class="grip"></i><svg class="ic"><use href="#gref"/></svg><svg class="ic"><use href="#grefx"/></svg><span class="combo rotn"><span class="hl">0</span><svg class="chev"><use href="#chev"/></svg></span><i class="sep"></i><svg class="ic"><use href="#flag"/></svg><i class="ovf"></i></div>
    <div class="bar"><i class="grip"></i><span class="lbl">3D Analyst<i class="tri"></i></span><i class="ovf more"><i></i><i></i></i></div>
  </div>

  <div class="row row3">
    <div class="bar"><i class="grip"></i><svg class="ic"><use href="#a1"/></svg><svg class="ic"><use href="#a2"/></svg><svg class="ic"><use href="#a3"/></svg><svg class="ic"><use href="#a4"/></svg><svg class="ic"><use href="#a5"/></svg><i class="sep"></i><svg class="ic"><use href="#a6"/></svg><svg class="ic"><use href="#a7"/></svg><i class="sep"></i><svg class="ic"><use href="#a8"/></svg><svg class="ic"><use href="#a9"/></svg><svg class="ic"><use href="#a10"/></svg><svg class="ic"><use href="#a11"/></svg><svg class="ic"><use href="#a12"/></svg><i class="sep"></i><svg class="ic"><use href="#a13"/></svg><svg class="ic"><use href="#a14"/></svg><i class="ovf"></i></div>
    <div class="bar"><i class="grip"></i><span class="lbl w-editor">Editor<i class="tri"></i></span><i class="sep"></i><svg class="ic"><use href="#e1"/></svg><svg class="ic"><use href="#e2"/></svg><i class="sep"></i><svg class="ic"><use href="#e3"/></svg><svg class="ic"><use href="#e4"/></svg><svg class="ic"><use href="#e5"/></svg><i class="arr gray"></i><svg class="ic"><use href="#e6"/></svg><i class="sep"></i><svg class="ic"><use href="#e7"/></svg><svg class="ic"><use href="#e8"/></svg><svg class="ic"><use href="#e9"/></svg><svg class="ic"><use href="#e10"/></svg><svg class="ic"><use href="#e11"/></svg><i class="sep"></i><svg class="ic"><use href="#e12"/></svg><svg class="ic"><use href="#e13"/></svg><i class="sep"></i><svg class="ic"><use href="#e14"/></svg><i class="ovf"></i></div>
    <div class="bar"><i class="grip"></i><span class="lbl w-las">LAS Dataset<i class="tri"></i></span><i class="sep"></i><span class="oldcombo"><i class="oldbtn"></i></span><i class="sep"></i><svg class="ic"><use href="#las"/></svg><i class="arr gray"></i><svg class="ic"><use href="#sq"/></svg><i class="arr gray"></i><span class="lbl w-filters">Filters<i class="tri"></i></span><i class="sep"></i><svg class="ic"><use href="#ar"/></svg><svg class="ic r180"><use href="#ar"/></svg><svg class="ic r90"><use href="#ar"/></svg><svg class="ic r270"><use href="#ar"/></svg><i class="sep"></i><svg class="ic"><use href="#prof"/></svg><svg class="ic"><use href="#prof2"/></svg><i class="ovf"></i></div>
  </div>

  <div class="row row4">
    <div class="bar"><i class="grip"></i><div class="hms"><span class="lbl">Preprocessing<i class="tri"></i></span><span class="lbl">Project Setup<i class="tri"></i></span><span class="lbl">Basin Processing<i class="tri"></i></span><span class="lbl">Characteristics<i class="tri"></i></span><span class="lbl">Parameters<i class="tri"></i></span><span class="lbl">HMS<i class="tri"></i></span><span class="lbl">Utility<i class="tri"></i></span></div><svg class="ic"><use href="#h1"/></svg><svg class="ic"><use href="#h2"/></svg><svg class="ic"><use href="#h3"/></svg><svg class="ic"><use href="#h4"/></svg><svg class="ic"><use href="#h5"/></svg><span class="combo resv">Reservoir<svg class="chev"><use href="#chev"/></svg></span><svg class="ic"><use href="#pencil"/></svg><span class="lbl">Help</span><i class="ovf"></i></div>
  </div>

  <main class="main">
    <section class="toc">
      <h2 class="cap"><span>Table Of Contents</span><svg class="pin"><use href="#pin"/></svg><svg class="x"><use href="#x"/></svg></h2>
      <div class="ptool"><svg class="ic on"><use href="#t1"/></svg><svg class="ic"><use href="#t2"/></svg><svg class="ic"><use href="#t3"/></svg><svg class="ic"><use href="#t4"/></svg><i class="sep"></i><svg class="ic"><use href="#opt"/></svg></div>
      <div class="toctree">
        <div class="trow root"><svg class="pm"><use href="#minus"/></svg><svg class="ic16"><use href="#layers"/></svg><b>Layers</b></div>
        <div class="trow"><svg class="pm"><use href="#minus"/></svg><svg class="chk"><use href="#chk"/></svg><span class="name picked">DrenajeSencilloIGAC100kZEMergeNoAttrib</span></div>
        <div class="line green"></div>
        <div class="trow"><svg class="pm"><use href="#minus"/></svg><svg class="chk"><use href="#chk"/></svg><span class="name">DrenajeSencilloIGAC100kZEMerge</span></div>
        <div class="line red"></div>
      </div>
    </section>
    <section class="mapwin">
      <canvas id="map" width="601" height="440"></canvas>
      <div class="vscroll"><i></i></div>
      <div class="mapfoot"><span class="vb on"><svg><use href="#dv"/></svg></span><span class="vb"><svg><use href="#lv"/></svg></span><i class="vsep"></i><span class="vb rfr"><svg><use href="#rf"/></svg></span><span class="pause"></span><i class="hthumb"></i></div>
    </section>
    <section class="catalog">
      <h2 class="cap"><span>Catalog</span><svg class="pin"><use href="#pin"/></svg><svg class="x"><use href="#x"/></svg></h2>
      <div class="ctool"><svg class="ic"><use href="#cbk"/></svg><i class="arr"></i><svg class="ic"><use href="#cfw"/></svg><svg class="ic"><use href="#cup"/></svg><svg class="ic"><use href="#home"/></svg><svg class="ic"><use href="#dbh"/></svg><i class="csep"></i><svg class="ic"><use href="#list"/></svg><i class="arr lg"></i><i class="csep"></i><svg class="ic"><use href="#fadd"/></svg><i class="csep"></i><svg class="ic"><use href="#tree"/></svg><i class="csep"></i><svg class="ic"><use href="#opt"/></svg></div>
      <div class="loc"><span>Location:</span><div class="combo locbox"><svg class="ic16"><use href="#fold"/></svg>.shp<svg class="chev"><use href="#chev"/></svg></div></div>
      <div class="ctree">
        <div class="crows">
          <div class="crow"><svg class="pm"><use href="#plus"/></svg><svg class="ic16"><use href="#foldh"/></svg><span>Home - R.LTWB\HECGeoHMS</span></div>
          <div class="crow"><svg class="pm"><use href="#minus"/></svg><svg class="ic16"><use href="#foldp"/></svg><span>Folder Connections</span></div>
          <div class="crow l1"><svg class="pm"><use href="#plus"/></svg><svg class="ic16"><use href="#foldc"/></svg><span>C:\</span></div>
          <div class="crow l1"><svg class="pm"><use href="#plus"/></svg><svg class="ic16"><use href="#foldc"/></svg><span>D:\</span></div>
          <div class="crow l1"><svg class="pm"><use href="#minus"/></svg><svg class="ic16"><use href="#foldc"/></svg><span>D:\R.LTWB</span></div>
          <div class="crow l2"><svg class="pm"><use href="#plus"/></svg><svg class="ic16"><use href="#fold"/></svg><span>.datasets</span></div>
          <div class="crow l2"><svg class="pm"><use href="#plus"/></svg><svg class="ic16"><use href="#fold"/></svg><span>.dem</span></div>
          <div class="crow l2"><svg class="pm"><use href="#plus"/></svg><svg class="ic16"><use href="#fold"/></svg><span>.gdb</span></div>
          <div class="crow l2"><svg class="pm"><use href="#plus"/></svg><svg class="ic16"><use href="#fold"/></svg><span>.git</span></div>
          <div class="crow l2"><svg class="pm"><use href="#plus"/></svg><svg class="ic16"><use href="#fold"/></svg><span>.github</span></div>
          <div class="crow l2"><svg class="pm"><use href="#plus"/></svg><svg class="ic16"><use href="#fold"/></svg><span>.icons</span></div>
          <div class="crow l2"><svg class="pm"><use href="#plus"/></svg><svg class="ic16"><use href="#fold"/></svg><span>.idea</span></div>
          <div class="crow l2"><svg class="pm"><use href="#plus"/></svg><svg class="ic16"><use href="#fold"/></svg><span>.map</span></div>
          <div class="crow l2"><svg class="pm"><use href="#plus"/></svg><svg class="ic16"><use href="#fold"/></svg><span>.ProjectionFile</span></div>
          <div class="crow l2"><svg class="pm"><use href="#plus"/></svg><svg class="ic16"><use href="#fold"/></svg><span>.refs</span></div>
          <div class="crow l2"><svg class="pm"><use href="#minus"/></svg><svg class="ic16"><use href="#foldo"/></svg><span class="cur">.shp</span></div>
          <div class="crow l3"><svg class="ic14"><use href="#poly"/></svg><span>AreaHidrografica2013.shp</span></div>
          <div class="crow l3"><svg class="ic14"><use href="#pts"/></svg><span>CNE_IDEAM.shp</span></div>
          <div class="crow l3"><svg class="ic14"><use href="#pts"/></svg><span>CNE_IDEAM_ZE.shp</span></div>
          <div class="crow l3"><svg class="ic14"><use href="#poly"/></svg><span>DrenajeDobleIGAC100kZE.shp</span></div>
          <div class="crow l3"><svg class="ic14"><use href="#lin"/></svg><span>DrenajeDobleIGAC100kZECenterline.shp</span></div>
          <div class="crow l3"><svg class="ic14"><use href="#lin"/></svg><span>DrenajeSencilloIGAC100kZE.shp</span></div>
        </div>
        <div class="cscroll"><i></i></div>
      </div>
      <div class="tabs"><span class="tab t-id"><svg class="ic16"><use href="#idw"/></svg>Identify</span><span class="tab t-cat sel"><svg class="ic16"><use href="#cat"/></svg>Catalog</span><span class="tab t-se"><svg class="ic16"><use href="#search"/></svg>Search</span><span class="tab t-cf"><svg class="ic16"><use href="#cf"/></svg>Create Features</span></div>
    </section>
  </main>

  <section class="table">
    <h2 class="cap blue"><span>Table</span><svg class="pin"><use href="#pin"/></svg><svg class="x"><use href="#x"/></svg></h2>
    <div class="ttool"><svg class="ic"><use href="#opt"/></svg><i class="arr"></i><i class="sep"></i><svg class="ic"><use href="#rel"/></svg><i class="arr"></i><i class="sep"></i><svg class="ic"><use href="#sat"/></svg><svg class="ic"><use href="#sw"/></svg><svg class="ic"><use href="#clr"/></svg><svg class="ic"><use href="#gz"/></svg><svg class="ic"><use href="#del"/></svg></div>
    <h2 class="cap blue"><span>DrenajeSencilloIGAC100kZEMergeNoAttrib</span><svg class="x"><use href="#x"/></svg></h2>
    <div class="gridwrap">
      <table class="grid">
        <colgroup><col class="c0"><col class="c1"><col class="c2"><col class="c3"><col class="c4"></colgroup>
        <tr><th></th><th class="r">FID</th><th>Shape *</th><th class="focus">GLOBALID</th><th>SHAPE_Leng</th></tr>
        <tr><td></td><td>0</td><td>Polyline</td><td>{9E3FF2D7-50D6-4B45-8DF1-AF27A32BCD09}</td><td>1558.280372</td></tr>
        <tr><td></td><td>1</td><td>Polyline</td><td>{78D15159-883A-477D-8472-0FD55DC8DE32}</td><td>2417.711283</td></tr>
        <tr><td></td><td>2</td><td>Polyline</td><td>{4D11FD58-941B-4F7F-B116-6E732ED5CEA5}</td><td>805.39365</td></tr>
        <tr><td></td><td>3</td><td>Polyline</td><td>{3A07159E-AC7E-418E-B8E4-17E2DEC9FAC3}</td><td>1108.61627</td></tr>
        <tr><td></td><td>4</td><td>Polyline</td><td>{7E65A5A9-7B0D-4A39-A34A-F35E6B5FD804}</td><td>4415.269868</td></tr>
        <tr><td></td><td>5</td><td>Polyline</td><td>{FF77E737-9AFC-499E-94AC-8EA6F4F847AC}</td><td>1601.456079</td></tr>
        <tr><td></td><td>6</td><td>Polyline</td><td>{FF738583-3A01-467A-AC83-0AF783855CC8}</td><td>1380.587813</td></tr>
      </table>
      <i class="gthumb"></i>
    </div>
    <div class="nav">
      <svg class="navic" viewBox="0 0 38 9"><path d="M1 1h2v7H1zM9 1v7L4.500 4.500zM29 1v7l-4.500-3.500z"/></svg><span class="rec">0</span>
      <svg class="navic two" viewBox="0 0 38 9"><path d="M5 1v7l4.500-3.500zM25 1v7l4.500-3.500zM31 1h2v7h-2z"/></svg>
      <i class="sep"></i><svg class="ic on"><use href="#all"/></svg><svg class="ic selr"><use href="#selr"/></svg><i class="sep"></i><span class="count">(0 out of 17069 Selected)</span>
    </div>
    <div class="ttab"><span>DrenajeSencilloIGAC100kZEMergeNoAttrib</span></div>
  </section>
  <footer class="status"><span>4968601.49&nbsp; 2635147.074 Meters</span><i class="sizer"></i></footer>

  <div class="dialog">
    <div class="dtitle"><span>Confirm Delete Field</span><svg viewBox="0 0 10 10"><path d="M0 0l10 10M10 0L0 10" stroke="#ccc"/></svg></div>
    <div class="dbody"><svg viewBox="0 0 28 28"><path d="M12 1.500q2-2.500 4 0L27.500 25.500q.8 2.500-1.500 2.500H2Q-.300 28 .500 25.500z" fill="url(#warn)" stroke="#e8a800" stroke-width=".7"/><path d="M14 8v9.500" stroke="#222" stroke-width="2.600" stroke-linecap="round"/><circle cx="14" cy="22.500" r="1.700" fill="#222"/></svg>
      <p>Warning, deleting fields can not be undone.<br><br>Are you sure you want to delete the currently selected field,<br>'GLOBALID'?</p></div>
    <div class="dfoot"><button>Yes</button><button>No</button></div>
  </div>
</div>
<script src="map.js"></script>
</body>
</html>
```
FILE: styles.css
```css
* { box-sizing: border-box; }
body { margin: 0; background: #fff; font: 12px/14px "Open Sans", "Noto Sans", sans-serif; letter-spacing: -0.35px; color: #000; overflow: hidden; }
.defs { position: absolute; width: 0; height: 0; }
h2, p { margin: 0; font-weight: normal; }
i { font-style: normal; }
.window { position: relative; display: flex; flex-direction: column; width: 1500px; height: 889px; margin: 2px 0 0 2px; border: 1px solid #c6c6c6; border-radius: 8px; background: #f0f0f0; overflow: hidden; }
.titlebar { height: 26px; background: #f3f3f3; display: flex; align-items: center; padding-left: 1px; flex: none; }
.title { margin-left: 2px; color: #8a8a8a; letter-spacing: -0.25px; }
.winbtns { width: 110px; height: 12px; margin-left: auto; margin-right: 14px; }
.menu { height: 25px; flex: none; display: grid; grid-template-columns: 34px 36px 41px 75px 45px 64px 94px 72px 65px 60px; align-items: center; padding: 1px 0 0 12px; background: linear-gradient(90deg, #f0f0f0, #fafafa); }

/* toolbars */
.row { display: grid; height: 26px; flex: none; padding-left: 1px; background: linear-gradient(90deg, #f0f0f0, #fafafa); }
.row1 { grid-template-columns: 618px 688px; column-gap: 22px; }
.row2 { grid-template-columns: 526px 175px 384px 150px 253px; column-gap: 2px; }
.row2 .bar:nth-child(3) { margin-left: 1px; margin-right: -2px; }
.row2 .bar:nth-child(4) { margin-left: 0; margin-right: 0; }
.row2 .bar:nth-child(5) { margin-left: 0; }
.row3 { grid-template-columns: 347px 417px 548px; column-gap: 13px; padding-left: 13px; }
.row3 .bar:nth-child(3) { margin-left: 12px; margin-right: -12px; }
.row4 { grid-template-columns: 831px; }
.bar { display: flex; align-items: center; background: linear-gradient(#fcfcfc, #efefef); border-radius: 3px 0 0 3px; min-width: 0; }
.ic { width: 22px; height: 22px; padding: 3px; flex: none; }
.ic.on { border: 1px solid #0078d7; background: #dbeaf8; padding: 2px; }
.ic.on.off { border-color: #9ac0e0; background: #e3ebf2; }
.ic16 { width: 16px; height: 16px; flex: none; }
.r180 { transform: rotate(180deg); }
.r90 { transform: rotate(90deg); }
.r270 { transform: rotate(-90deg); }
.grip { width: 9px; height: 15px; flex: none; background: repeating-linear-gradient(#a8a8a8 0 2px, transparent 2px 4px) 5px 0 / 2px 100% no-repeat; }
.sep { width: 6px; height: 17px; flex: none; background: linear-gradient(#b0b0b0, #b0b0b0) 2px 0 / 1px 100% no-repeat; }
.sep.thin { width: 5px; }
.arr { width: 10px; height: 22px; flex: none; display: flex; align-items: center; justify-content: center; }
.row1 .arr, .row3 .arr { width: 11px; }
.row1 .arr.wide { width: 16px; }
.arr::before, .tri { content: ""; width: 5px; height: 3px; background: #000; clip-path: polygon(0 0, 100% 0, 50% 100%); }
.tri { display: inline-block; margin-left: 3px; vertical-align: 3px; flex: none; }
.arr.gray::before { background: #999; }
.arr.lg::before { width: 7px; height: 4px; background: #666; }
.lbl { padding-left: 5px; white-space: nowrap; flex: none; }
.w-drawing { width: 60px; }
.w-snapping { width: 66px; }
.w-editor { width: 47px; }
.w-las { width: 78px; }
.w-filters { width: 47px; }
.hms { display: grid; grid-template-columns: 90px 86px 104px 93px 75px 42px 46px; }
.ovf { width: 10px; height: 24px; margin-left: auto; align-self: end; flex: none; position: relative; background: linear-gradient(#e8e8e8, #a0a0a0); display: flex; flex-direction: column; align-items: center; justify-content: flex-end; gap: 1px; padding-bottom: 4px; }
.ovf::before { content: ""; width: 5px; height: 1px; background: #000; }
.ovf::after { content: ""; width: 5px; height: 3px; background: #000; clip-path: polygon(0 0, 100% 0, 50% 100%); }
.more i { position: absolute; top: 4px; left: 2px; width: 2px; height: 3px; background: #000; clip-path: polygon(0 0, 100% 50%, 0 100%); }
.more i + i { left: 6px; }
.combo { display: flex; align-items: center; height: 21px; flex: none; border: 1px solid #7a7a7a; border-radius: 2px; background: #fff; padding-left: 2px; letter-spacing: -0.5px; }
.chev { width: 9px; height: 6px; margin-left: auto; margin-right: 4px; flex: none; }
.scale { width: 149px; }
.font { width: 171px; }
.size { width: 46px; margin-left: 1px; }
.pct { width: 59px; border-color: #c4c4c4; }
.rotn { width: 56px; margin-left: 1px; }
.resv { width: 107px; border-color: #c4c4c4; margin-left: 1px; }
.hl { background: #0078d7; color: #fff; line-height: 13px; padding: 0 1px; }
.hl.dim { color: #5f6b7c; }
.otf { width: 13px; height: 14px; margin: 0 4px 0 1px; border: 1px solid #6888a8; background: #cfe4f4; font: italic bold 12px/12px "Liberation Serif", serif; color: #084808; text-align: center; }
.glyph { width: 22px; text-align: center; font: bold 15px/20px "Liberation Serif", serif; letter-spacing: 0; }
.glyph.big { font-size: 18px; }
.it { font-style: italic; }
.un { text-decoration: underline; font-weight: normal; -webkit-text-stroke: .3px #000; }
.swatch { width: 22px; height: 18px; flex: none; display: flex; align-items: flex-end; justify-content: center; padding-bottom: 1px; margin-top: 2px; border-left: 2px solid transparent; border-right: 2px solid transparent; background: linear-gradient(#000, #000) 0 100% / 100% 3px no-repeat padding-box; }
.swatch b { font: bold 16px/16px "Liberation Serif", serif; margin-bottom: 2px; letter-spacing: 0; }
.swatch svg { width: 15px; height: 11px; margin-bottom: 4px; }
.cream { background-image: linear-gradient(#ffffbe, #ffffbe); }
.lime { background-image: linear-gradient(#55ff00, #55ff00); }
.dot { width: 5px; height: 5px; border-radius: 50%; background: #0000e0; margin-bottom: 8px; }
.oldcombo { width: 179px; margin-right: 1px; height: 19px; flex: none; border: 2px solid; border-color: #696969 #e3e3e3 #e3e3e3 #696969; background: #f0f0f0; display: flex; justify-content: flex-end; }
.oldbtn { width: 16px; height: 15px; border: 1px solid; border-color: #fff #696969 #696969 #fff; display: flex; align-items: center; justify-content: center; }
.oldbtn::before { content: ""; width: 7px; height: 4px; background: #999; clip-path: polygon(0 0, 100% 0, 50% 100%); }

/* panels */
.main { display: grid; grid-template-columns: 375px 622px 492px; column-gap: 4px; height: 460px; flex: none; background: #f6f6f6; }
.cap { height: 20px; display: flex; align-items: center; padding: 0 5px 0 4px; font-size: 12px; background: linear-gradient(90deg, #bfcddb, #d7e4f2); flex: none; letter-spacing: -0.3px; }
.cap.blue { background: linear-gradient(90deg, #99b4d1, #b9d1ea); }
.cap span { margin-right: auto; padding-top: 2px; }
.table .cap span { letter-spacing: -0.35px; }
.pin { width: 9px; height: 10px; margin-right: 7px; }
.x { width: 9px; height: 9px; }
.toc { display: flex; flex-direction: column; }
.ptool { height: 26px; flex: none; display: flex; align-items: center; padding-left: 4px; background: linear-gradient(#fcfcfc, #efefef); }
.toctree { flex: 1; border: 1px solid #828790; background: #fff; margin-right: 1px; padding-top: 1px; }
.trow { height: 18px; display: flex; align-items: center; padding-left: 27px; }
.trow.root { padding-left: 8px; }
.root b { letter-spacing: -0.6px; }
.pm { width: 9px; height: 9px; flex: none; margin-top: 2px; }
.root .ic16 { margin: 0 5px 0 6px; }
.chk { width: 11px; height: 11px; margin: 0 6px 0 8px; }
.name { line-height: 18px; padding: 0 2px; letter-spacing: -0.35px; }
.picked { background: #0078d7; color: #fff; }
.line { height: 18px; margin-left: 59px; width: 14px; background: linear-gradient(#00a273, #00a273) 0 9px / 100% 1px no-repeat; }
.line.red { background-image: linear-gradient(#800000, #800000); }
.mapwin { display: grid; grid-template-columns: 601px 17px; grid-template-rows: 440px 16px; border: 2px solid; border-color: #7d7d7d #fff #fff #7d7d7d; background: #f0f0f0; margin-left: -1px; margin-right: 1px; }
#map { background: #fff; }
.vscroll { border-left: 2px solid #fff; padding: 22px 0 0 8px; }
.vscroll i { display: block; width: 2px; height: 213px; background: #858585; }
.mapfoot { grid-column: 1 / 3; display: flex; align-items: center; }
.vb { width: 17px; height: 16px; display: flex; align-items: center; justify-content: center; }
.vb.on { background: #cce8ff; border: 1px solid #99d1ff; }
.vb svg { width: 10px; height: 10px; }
.vsep { width: 1px; height: 13px; background: #888; margin: 0 4px 0 2px; }
.pause { width: 6px; height: 7px; margin-left: 6px; border: solid #1c4890; border-width: 0 2px; }
.rfr { margin-left: 1px; }
.hthumb { width: 492px; height: 2px; background: #858585; margin-left: 22px; margin-top: 1px; }
.catalog { display: flex; flex-direction: column; margin-left: 1px; width: 492px; min-width: 0; }
.ctool { height: 24px; flex: none; display: flex; align-items: center; background: #fff; padding: 1px 0 0 4px; border-bottom: 1px solid #ddd; }
.ctool .ic { width: 23px; }
.ctool .arr { width: 12px; }
.ctool .arr.lg { width: 16px; }
.csep { width: 8px; height: 18px; background: linear-gradient(#888, #888) 3px 0 / 1px 100% no-repeat; flex: none; }
.loc { height: 26px; flex: none; display: flex; align-items: center; padding: 1px 4px 0 2px; }
.loc > span { width: 52px; font-size: 11.5px; padding-top: 1px; }
.locbox { flex: 1; letter-spacing: -0.2px; }
.locbox .ic16 { margin-right: 3px; margin-left: 1px; }
.ctree { height: 364px; flex: none; display: flex; border: solid; border-width: 2px 1px 1px 2px; border-color: #6f6f6f #e3e3e3 #e3e3e3 #6f6f6f; margin-right: 4px; background: #fff; overflow: hidden; }
.crows { flex: 1; overflow: hidden; }
.crow { height: 17px; display: flex; align-items: center; padding-left: 7px; letter-spacing: -0.28px; }
.crow .pm { margin-top: 0; }
.l1 { padding-left: 26px; }
.l2 { padding-left: 45px; }
.l3 { padding-left: 79px; letter-spacing: -0.44px; }
.crow .ic16, .crow .ic14 { margin: 0 2px 0 7px; }
.ic14 { width: 16px; height: 14px; flex: none; }
.crow.l3 .ic14 { margin: 0 3px 0 0; }
.crow span { padding: 0 2px; line-height: 17px; }
.cur { background: #f0f0f0; }
.cscroll { width: 17px; background: #f0f0f0; padding: 16px 0 0 7px; }
.cscroll i { display: block; width: 2px; height: 124px; background: #858585; }
.tabs { display: flex; margin: 5px 0 0 2px; height: 20px; }
.tab { display: flex; align-items: center; gap: 3px; border: 1px solid #919191; border-top: 0; border-left-color: #aaa; border-radius: 0 0 4px 4px; color: #6d6d6d; padding-left: 4px; margin-right: 1px; letter-spacing: -0.35px; white-space: nowrap; }
.tab.sel { background: #fff; color: #000; letter-spacing: -0.4px; }
.t-id { width: 68px; }
.t-cat { width: 68px; }
.t-se { width: 62px; }
.t-cf { width: 109px; }

/* attribute table */
.table { margin-top: 5px; flex: none; display: flex; flex-direction: column; }
.ttool { height: 26px; display: flex; align-items: center; padding-left: 4px; background: linear-gradient(#fcfcfc, #f1f1f1); flex: none; }
.ttool .arr:nth-of-type(3) { width: 12px; }
.gridwrap { height: 130px; flex: none; display: flex; justify-content: space-between; align-items: flex-start; overflow: hidden; border: solid #6f6f6f; border-width: 3px 0 0 3px; border-top-color: #8a8a8a; margin-left: 1px; }
.grid { border-collapse: collapse; table-layout: fixed; width: 590px; }
.c0 { width: 16px; } .c1 { width: 44px; } .c2 { width: 80px; } .c3 { width: 342px; } .c4 { width: 107px; }
.grid th { height: 18px; padding: 0; font-weight: normal; font-size: 13px; line-height: 14px; letter-spacing: -0.2px; background: #f0f0f0; border: solid #000; border-width: 1px 2px 2px 1px; }
.grid th.r { text-align: right; padding-right: 9px; }
.grid th.focus { outline: 1px dotted #fff; outline-offset: -1px; border: 2px solid #000; }
.grid td { height: 17px; padding: 0 2px; line-height: 14px; font-weight: 300; letter-spacing: -0.48px; background: #fff; border: 1px solid #696969; overflow: hidden; white-space: nowrap; -webkit-text-stroke: .15px #000; }
.grid td:first-child { background: #f0f0f0; border-right: 2px solid #000; border-bottom-color: #000; }
.grid td:nth-child(2), .grid td:nth-child(5) { text-align: right; }
.grid td:nth-child(5) { letter-spacing: -0.38px; padding-right: 3px; }
.gthumb { width: 2px; height: 18px; background: #858585; margin: 17px 11px 0 0; }
.nav { height: 28px; flex: none; display: flex; align-items: center; background: linear-gradient(#fcfcfc, #f1f1f1); border-left: 3px solid #8a8a8a; border-bottom: 1px solid #fff; margin-left: 1px; padding: 1px 0 0 8px; }
.navic { width: 38px; height: 9px; }
.rec { width: 59px; height: 20px; line-height: 20px; background: #fff; text-align: right; padding-right: 3px; }
.navic.two { margin-left: 5px; margin-right: 2px; }
.nav .sep { margin-right: 0; }
.nav .selr { height: 16px; margin-bottom: 5px; }
.count { margin-left: 5px; letter-spacing: -0.42px; padding-top: 1px; }
.ttab { height: 21px; background: linear-gradient(90deg, #f0f0f0, #fafafa); padding-left: 2px; }
.ttab span { display: block; width: 237px; height: 20px; line-height: 14px; background: #fff; border: 1px solid #919191; border-top: 0; border-radius: 0 0 4px 4px; outline: 1px dotted #000; outline-offset: -4px; padding: 4px 5px; letter-spacing: -0.36px; }
.status { flex: 1; display: flex; align-items: center; justify-content: flex-end; padding: 3px 2px 0 0; }
.status span { margin-right: 95px; font-size: 11.5px; letter-spacing: -0.42px; }
.sizer { width: 10px; height: 10px; align-self: flex-end; background: radial-gradient(circle, #aaa 1px, transparent 1.300px) 0 0 / 4px 4px; clip-path: polygon(100% 0, 100% 100%, 0 100%); }

/* message box */
.dialog { position: absolute; left: 613px; top: 648px; width: 403px; height: 167px; border: 1px solid #b4b4b4; border-radius: 8px; overflow: hidden; background: #fff; display: flex; flex-direction: column; }
.dtitle { height: 26px; background: #f3f3f3; color: #8c8c8c; display: flex; align-items: center; justify-content: space-between; padding: 1px 10px 0 4px; }
.dtitle svg { width: 10px; height: 10px; }
.dbody { flex: 1; display: flex; padding: 24px 0 0 23px; letter-spacing: 0.02px; }
.dbody svg { width: 28px; height: 29px; flex: none; }
.dbody p { margin: -2px 0 0 11px; font-size: 11px; line-height: 13px; white-space: nowrap; }
.dfoot { height: 42px; background: #f0f0f0; display: flex; justify-content: flex-end; gap: 10px; padding: 9px 16px 0 0; }
.dfoot button { width: 73px; height: 22px; padding: 1px 0 0; border: 1px solid #ccc; border-radius: 4px; background: #fdfdfd; font: inherit; font-size: 11px; }
```
FILE: map.js
```js
// Draws the drainage network: fixed main stems plus seeded tributaries
// that walk downhill until they meet an existing stream.
(function () {
  var cv = document.getElementById('map'), W = cv.width, H = cv.height;
  var ctx = cv.getContext('2d'), SX = 2.489, SY = 3;
  ctx.fillStyle = '#00a273';
  var s = 12345;
  function rnd() { s = (s * 1664525 + 1013904223) >>> 0; return s / 4294967296; }
  function pts(a) {
    var r = [];
    for (var i = 0; i < a.length; i += 2) r.push([a[i] / SX - 4, a[i + 1] / SY - 5]);
    return r;
  }
  var extent = pts([155,97,1368,97,1368,455,1340,560,1300,580,1298,680,1290,760,1285,880,1275,950,1245,1020,1220,1080,1215,1160,1250,1195,1235,1240,1205,1270,1190,1334,125,1334,125,195,165,150]);
  var voids = [
    [968,540,1005,545,1042,610,1020,645,1000,665,970,620],
    [345,870,368,890,385,980,405,1020,430,1110,385,1070,322,980,335,930],
    [530,1060,580,1120,602,1180,605,1230,560,1240,520,1260,445,1140,470,1110],
    [290,795,365,785,345,840,292,870], [385,790,438,790,370,860],
    [1222,220,1270,225,1292,270,1350,300,1245,320], [1130,270,1155,290,1172,380,1145,395,1130,330],
    [1198,290,1238,290,1210,350], [1285,150,1365,155,1365,180,1282,185],
    [690,900,770,930,775,1000,758,990,740,930], [630,1260,678,1190,684,1240,683,1334,640,1334],
    [168,120,235,105,242,150,205,130], [860,1290,920,1285,930,1334,820,1334],
    [940,1005,1000,1010,950,1060,870,1090], [920,1090,1000,1060,1040,1075,1040,1105,930,1110],
    [910,690,950,695,962,750,935,715], [135,190,165,240,185,275,150,235],
    [250,280,300,290,305,318,260,305], [560,1245,600,1250,595,1320,575,1334],
    [790,1095,835,1110,800,1165,782,1120], [190,300,215,330,225,380,205,360], [130,490,160,500,175,570,140,560],
    [610,185,680,170,700,185,640,195], [878,750,895,770,905,810,885,790], [680,1065,715,1085,700,1100], [838,830,858,790,862,830,845,850]
  ].map(pts);
  var stems = [
    [1140,400,1110,520,1060,570,1045,640,1000,680,995,760,930,830,880,880,830,930,780,990,730,1060,710,1130,690,1200,700,1270,700,1334],
    [975,700,1000,760,985,800,920,860,850,930,790,1010,750,1070,725,1150],
    [350,860,320,950,370,1030,430,1110,470,1190,520,1250,540,1334],
    [375,740,350,800,300,880,300,940,325,990,370,1020], [370,880,385,960,410,1020,430,1110],
    [340,1020,400,1080,440,1150,490,1220,525,1290],
    [530,1010,575,1100,605,1180,610,1260,600,1334], [640,1130,640,1200,620,1260,605,1320],
    [1075,1190,990,1160,870,1180,790,1240,705,1290], [1020,930,920,960,850,1010,800,1070,730,1140],
    [1080,1130,960,1130,860,1140,780,1200,705,1250], [1065,1260,940,1260,830,1265,740,1310,700,1330],
    [770,690,860,740,885,800,920,840], [690,830,750,890,805,920], [650,910,700,990,730,1060],
    [770,770,800,850,820,910], [835,690,900,760,920,830], [580,1000,650,1090,690,1150], [620,970,650,1060,690,1130],
    [165,160,170,200,215,300,230,340], [130,260,170,340,190,440,200,560,210,600],
    [130,370,180,420,215,510,250,560,300,590], [1290,200,1300,260,1355,330], [1230,330,1200,380,1140,400],
    [1300,330,1220,370,1150,420], [968,540,968,620,985,700,1000,780], [1100,400,1110,520], [540,1000,430,1110]
  ].map(pts);
  // zones: box, stream spacing, stream length, wander; later zones override earlier ones
  var zones = [
    [0,0,1400,1400,.93,26,.9], [125,97,700,350,.9,14,1.5], [125,170,300,620,2.5,60,.5], [240,97,700,170,.8,12,1.6],
    [580,180,780,420,1.3,14,1.3], [300,300,770,640,.93,12,1.3], [300,640,620,1000,.95,14,1.3],
    [125,650,285,1000,.7,14,1.3], [700,97,1240,290,.9,12,1.6],
    [430,980,1075,1334,2.8,90,.35], [620,850,1040,1000,2,50,.5], [690,680,1000,850,1.7,45,.5],
    [1020,380,1140,560,1.2,40,.7], [1120,170,1368,400,1.8,40,.8], [1230,330,1368,570,.8,14,1.2],
    [775,290,1120,380,.2,10,2], [775,380,1010,560,.3,10,2], [775,560,915,650,.3,10,2],
    [1120,470,1240,660,.3,10,2], [1230,560,1300,900,.7,12,1.5],
    [280,780,440,880,4,30,.5], [300,870,425,1100,3,40,.5], [125,1030,450,1334,1.3,30,.5],
    [1010,660,1235,1000,.96,16,1], [1040,900,1250,1334,1.3,24,1]
  ].map(function (z) { return [z[0]/SX-4, z[1]/SY-5, z[2]/SX-4, z[3]/SY-5, z[4], z[5], z[6]]; });
  function inside(p, x, y) {
    var c = false;
    for (var i = 0, j = p.length - 1; i < p.length; j = i++)
      if ((p[i][1] > y) !== (p[j][1] > y) && x < (p[j][0]-p[i][0]) * (y-p[i][1]) / (p[j][1]-p[i][1]) + p[i][0]) c = !c;
    return c;
  }
  var ok = new Uint8Array(W * H), occ = new Uint8Array(W * H);
  for (var y = 0; y < H; y++) for (var x = 0; x < W; x++) {
    if (!inside(extent, x > 480 ? x + 2 * Math.sin(y * .8) * (y > 120 ? 1 : 0) : x, y)) continue;
    var v = 1, wx = x + 1.5 * Math.sin(y * .9), wy = y + 1.5 * Math.sin(x * 1.1);
    for (var k = 0; k < voids.length && v; k++) if (inside(voids[k], wx, wy)) v = 0;
    ok[y * W + x] = v;
  }
  function zone(x, y) {
    var r = zones[0], jx = x + (rnd() + rnd() - 1) * 16, jy = y + (rnd() + rnd() - 1) * 14;
    for (var i = 1; i < zones.length; i++) { var z = zones[i]; if (jx >= z[0] && jx < z[2] && jy >= z[1] && jy < z[3]) r = z; }
    return r;
  }
  var lat = []; for (var n = 0; n < 4096; n++) lat.push(rnd());
  function noise(x, y) {
    var i = Math.floor(x), j = Math.floor(y), f = x - i, g = y - j;
    function L(a, b) { return lat[((b & 63) * 64 + (a & 63))]; }
    return (L(i,j)*(1-f)+L(i+1,j)*f)*(1-g)+(L(i,j+1)*(1-f)+L(i+1,j+1)*f)*g;
  }
  var samples = [];
  stems.forEach(function (p) {
    for (var i = 0; i < p.length - 1; i++) {
      var dx = p[i+1][0]-p[i][0], dy = p[i+1][1]-p[i][1], d = Math.hypot(dx, dy);
      for (var t = 0; t < d; t += .6) {
        var x = p[i][0]+dx*t/d, y = p[i][1]+dy*t/d;
        var o = (noise(x / 4, y / 4) - .5) * 7;
        var px = Math.round(x - dy/d*o), py = Math.round(y + dx/d*o);
        if (px >= 0 && py >= 0 && px < W && py < H) occ[py * W + px] = 1;
        if (Math.floor(t) % 6 === 0) samples.push([x, y, dx/d, dy/d]);
      }
    }
  });
  var G = 6, gw = Math.ceil(W / G), field = [];
  for (var gy = 0; gy < Math.ceil(H / G); gy++) for (var gx = 0; gx < gw; gx++) {
    var cx = gx * G + 3, cy = gy * G + 3, best = 1e9, b = null;
    samples.forEach(function (q) { var d = (q[0]-cx)*(q[0]-cx)+(q[1]-cy)*(q[1]-cy); if (d < best) { best = d; b = q; } });
    best = Math.sqrt(best) + .01;
    var a = noise(cx / 14, cy / 14) * 12.6, w = Math.max(0, Math.min(1, 1.4 - best / 50));
    field.push([w*((b[0]-cx)/best*.6 + b[2]*1.1) + (1-w)*Math.cos(a), w*((b[1]-cy)/best*.6 + b[3]*1.1) + (1-w)*Math.sin(a)]);
  }
  function free(x, y, r) {
    for (var j = -r; j <= r; j++) for (var i = -r; i <= r; i++) if (occ[(y+j)*W + x+i]) return false;
    return true;
  }
  for (var m = 0; m < 420000; m++) {
    var sx = Math.floor(rnd() * W), sy = Math.floor(rnd() * H);
    if (!ok[sy * W + sx]) continue;
    var z = zone(sx, sy), r = Math.floor(z[4]) + (rnd() < z[4] % 1 ? 1 : 0);
    if (!free(sx, sy, r)) continue;
    var fx = sx, fy = sy, len = z[5] * (.4 + rnd()), turn = (rnd() - .5) * z[6] * 1.8, path = [];
    for (var st = 0; st < len; st++) {
      var ix = Math.round(fx), iy = Math.round(fy);
      if (ix < 0 || iy < 0 || ix >= W || iy >= H || !ok[iy * W + ix]) break;
      if (occ[iy * W + ix]) break;
      path.push(iy * W + ix);
      var f = field[Math.floor(iy / G) * gw + Math.floor(ix / G)];
      if (st % 3 === 0) turn += (rnd() - .5) * (1.1 + z[6] * .5), turn *= .8;
      var ang = Math.atan2(f[1], f[0]) + turn;
      fx += Math.cos(ang); fy += Math.sin(ang);
      if (Math.round(fx) === ix && Math.round(fy) === iy) { fx += Math.cos(ang); fy += Math.sin(ang); }
    }
    path.forEach(function (p) { occ[p] = 1; });
  }
  for (var yy = 0; yy < H; yy++) for (var xx = 0; xx < W; xx++) if (occ[yy * W + xx]) ctx.fillRect(xx, yy, 1, 1);
})();
```
